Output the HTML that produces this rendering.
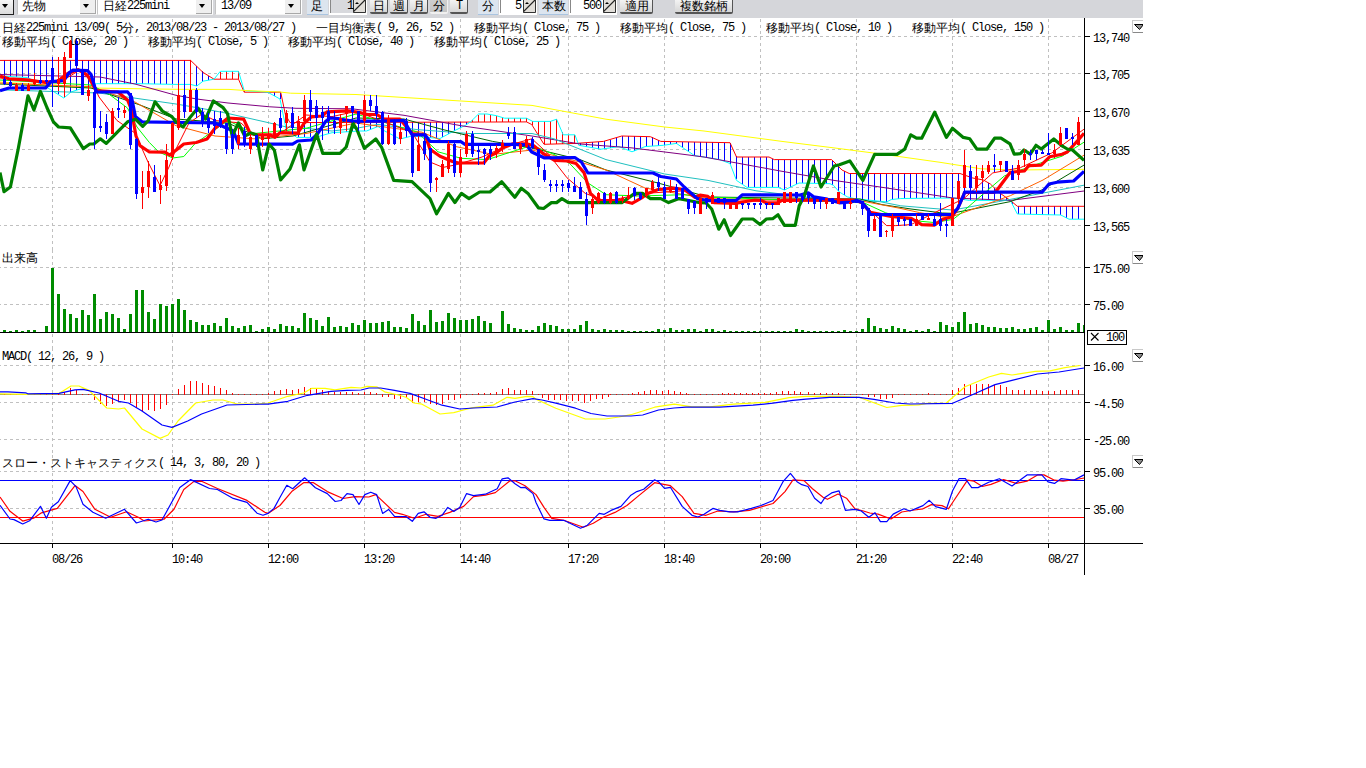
<!DOCTYPE html>
<html lang="ja"><head><meta charset="utf-8"><style>
html,body{margin:0;padding:0;background:#fff;width:1366px;height:768px;overflow:hidden;position:relative}
.t{position:absolute;font-family:"Liberation Mono",monospace;font-size:12px;letter-spacing:-1.2px;line-height:14px;color:#000;white-space:nowrap}
.j{display:inline-block;overflow:hidden;letter-spacing:0;font-family:"Liberation Sans",sans-serif;font-size:12px;vertical-align:top;text-align:left}
svg{position:absolute;left:0;top:0}
.tb{position:absolute;box-sizing:border-box}
</style></head><body>
<div class="tb" style="left:0;top:0;width:1143px;height:18px;background:#d5d6da"></div>
<div class="tb" style="left:0;top:0;width:14px;height:15px;background:linear-gradient(#f6f6f6,#dcdcdc);border-right:1px solid #222;border-bottom:1px solid #222"></div>
<div class="tb" style="left:2px;top:4px;width:0;height:0;border-left:3.5px solid transparent;border-right:3.5px solid transparent;border-top:4px solid #000"></div>
<div class="tb" style="left:17px;top:0;width:80px;height:15px;background:#fff;border-left:1px solid #c4c4c4;border-bottom:1px solid #f4f4f4"></div>
<div class="tb" style="left:80px;top:0;width:16px;height:14px;background:#efefef;border-right:1px solid #a8a8a8;border-bottom:1px solid #a8a8a8"></div>
<div class="tb" style="left:83px;top:4px;width:0;height:0;border-left:3.5px solid transparent;border-right:3.5px solid transparent;border-top:4px solid #000"></div>
<div class="tb" style="left:97px;top:0;width:116px;height:15px;background:#fff;border-left:1px solid #c4c4c4;border-bottom:1px solid #f4f4f4"></div>
<div class="tb" style="left:196px;top:0;width:16px;height:14px;background:#efefef;border-right:1px solid #a8a8a8;border-bottom:1px solid #a8a8a8"></div>
<div class="tb" style="left:199px;top:4px;width:0;height:0;border-left:3.5px solid transparent;border-right:3.5px solid transparent;border-top:4px solid #000"></div>
<div class="tb" style="left:215px;top:0;width:87px;height:15px;background:#fff;border-left:1px solid #c4c4c4;border-bottom:1px solid #f4f4f4"></div>
<div class="tb" style="left:285px;top:0;width:16px;height:14px;background:#efefef;border-right:1px solid #a8a8a8;border-bottom:1px solid #a8a8a8"></div>
<div class="tb" style="left:288px;top:4px;width:0;height:0;border-left:3.5px solid transparent;border-right:3.5px solid transparent;border-top:4px solid #000"></div>
<div class="tb" style="left:307px;top:0;width:21px;height:15px;background:#dce5ef;border-bottom:1px solid #a9c4e0"></div>
<div class="tb" style="left:329px;top:0;width:38px;height:15px;background:#fff"></div>
<div class="tb" style="left:330px;top:0;width:23px;height:13px;background:#d8d9dd;border-left:1px solid #888"></div>
<svg class="tb" style="left:353px;top:0" width="13" height="13"><path d="M0 0H13V13H0Z" fill="#e2dfda"/><path d="M0 12 L12 0" stroke="#222" stroke-width="1.2"/><path d="M0.5 0V12.5H12.5V0" stroke="#333" fill="none"/><path d="M2 4h4l-2-2z" fill="#000"/></svg>
<div class="tb" style="left:370px;top:-2px;width:18px;height:16px;background:linear-gradient(#f8f8f8,#d6d6d6);border-right:1px solid #555;border-bottom:2px solid #555;border-radius:0 0 2px 2px"></div>
<div class="tb" style="left:390px;top:-2px;width:18px;height:16px;background:linear-gradient(#f8f8f8,#d6d6d6);border-right:1px solid #555;border-bottom:2px solid #555;border-radius:0 0 2px 2px"></div>
<div class="tb" style="left:410px;top:-2px;width:18px;height:16px;background:linear-gradient(#f8f8f8,#d6d6d6);border-right:1px solid #555;border-bottom:2px solid #555;border-radius:0 0 2px 2px"></div>
<div class="tb" style="left:430px;top:-2px;width:18px;height:16px;background:linear-gradient(#d0d0d0,#c4c4c4);border-right:1px solid #f0f0f0;border-bottom:2px solid #f0f0f0;border-radius:0 0 2px 2px"></div>
<div class="tb" style="left:450px;top:-2px;width:18px;height:16px;background:linear-gradient(#f8f8f8,#d6d6d6);border-right:1px solid #555;border-bottom:2px solid #555;border-radius:0 0 2px 2px"></div>
<div class="tb" style="left:478px;top:0;width:20px;height:15px;background:#dce5ef;border-bottom:1px solid #a9c4e0"></div>
<div class="tb" style="left:499px;top:0;width:38px;height:15px;background:#fff"></div>
<div class="tb" style="left:500px;top:0;width:23px;height:13px;background:#fff;border-left:1px solid #888"></div>
<svg class="tb" style="left:523px;top:0" width="13" height="13"><path d="M0 0H13V13H0Z" fill="#e2dfda"/><path d="M0 12 L12 0" stroke="#222" stroke-width="1.2"/><path d="M0.5 0V12.5H12.5V0" stroke="#333" fill="none"/><path d="M2 4h4l-2-2z" fill="#000"/></svg>
<div class="tb" style="left:539px;top:0;width:29px;height:15px;background:#dce5ef;border-bottom:1px solid #a9c4e0"></div>
<div class="tb" style="left:569px;top:0;width:48px;height:15px;background:#fff"></div>
<div class="tb" style="left:570px;top:0;width:33px;height:13px;background:#fff;border-left:1px solid #888"></div>
<svg class="tb" style="left:603px;top:0" width="13" height="13"><path d="M0 0H13V13H0Z" fill="#e2dfda"/><path d="M0 12 L12 0" stroke="#222" stroke-width="1.2"/><path d="M0.5 0V12.5H12.5V0" stroke="#333" fill="none"/><path d="M2 4h4l-2-2z" fill="#000"/></svg>
<div class="tb" style="left:620px;top:-2px;width:33px;height:16px;background:linear-gradient(#f8f8f8,#d6d6d6);border-right:1px solid #555;border-bottom:2px solid #555;border-radius:0 0 2px 2px"></div>
<div class="tb" style="left:675px;top:-2px;width:58px;height:16px;background:linear-gradient(#f8f8f8,#d6d6d6);border-right:1px solid #555;border-bottom:2px solid #555;border-radius:0 0 2px 2px"></div>
<div class="t tbt" style="left:22px;top:-1px"><span class="j" style="width:24px">先物</span></div>
<div class="t tbt" style="left:103px;top:-1px"><span class="j" style="width:24px">日経</span>225mini</div>
<div class="t tbt" style="left:221px;top:-1px">13/09</div>
<div class="t tbt" style="left:311px;top:-1px"><span class="j" style="width:12px">足</span></div>
<div class="t tbt" style="left:347px;top:-1px">1</div>
<div class="t tbt" style="left:373px;top:-1px"><span class="j" style="width:12px">日</span></div>
<div class="t tbt" style="left:393px;top:-1px"><span class="j" style="width:12px">週</span></div>
<div class="t tbt" style="left:413px;top:-1px"><span class="j" style="width:12px">月</span></div>
<div class="t tbt" style="left:433px;top:-1px"><span class="j" style="width:12px">分</span></div>
<div class="t tbt" style="left:456px;top:-1px">T</div>
<div class="t tbt" style="left:482px;top:-1px"><span class="j" style="width:12px">分</span></div>
<div class="t tbt" style="left:515px;top:-1px">5</div>
<div class="t tbt" style="left:542px;top:-1px"><span class="j" style="width:24px">本数</span></div>
<div class="t tbt" style="left:583px;top:-1px">500</div>
<div class="t tbt" style="left:625px;top:-1px"><span class="j" style="width:24px">適用</span></div>
<div class="t tbt" style="left:680px;top:-1px"><span class="j" style="width:48px">複数銘柄</span></div>
<svg width="1366" height="768" viewBox="0 0 1366 768"><path d="M52.5 19V250M52.5 250V348M52.5 348V455M52.5 455V543M172.5 19V250M172.5 250V348M172.5 348V455M172.5 455V543M268.5 19V250M268.5 250V348M268.5 348V455M268.5 455V543M364.5 19V250M364.5 250V348M364.5 348V455M364.5 455V543M460.5 19V250M460.5 250V348M460.5 348V455M460.5 455V543M568.5 19V250M568.5 250V348M568.5 348V455M568.5 455V543M664.5 19V250M664.5 250V348M664.5 348V455M664.5 455V543M760.5 19V250M760.5 250V348M760.5 348V455M760.5 455V543M856.5 19V250M856.5 250V348M856.5 348V455M856.5 455V543M952.5 19V250M952.5 250V348M952.5 348V455M952.5 455V543M1048.5 19V250M1048.5 250V348M1048.5 348V455M1048.5 455V543" stroke="#c0c0c0" stroke-width="1" stroke-dasharray="3 3" fill="none" shape-rendering="crispEdges"/>
<path d="M0 36.5H1084M0 73.5H1084M0 111.5H1084M0 149.5H1084M0 187.5H1084M0 225.5H1084M0 267.5H1084M0 304.5H1084M0 365.5H1084M0 402.5H1084M0 439.5H1084M0 471.5H1084M0 508.5H1084" stroke="#c0c0c0" stroke-width="1" stroke-dasharray="3 3" stroke-dashoffset="2" fill="none" shape-rendering="crispEdges"/>
<path d="M3 330h3v2h-3zM9 331h3v1h-3zM15 330h3v2h-3zM21 331h3v1h-3zM27 330h3v2h-3zM33 330h3v2h-3zM45 326h3v6h-3zM51 268h3v64h-3zM57 294h3v38h-3zM63 309h3v23h-3zM69 314h3v18h-3zM75 318h3v14h-3zM81 310h3v22h-3zM87 315h3v17h-3zM93 294h3v38h-3zM99 319h3v13h-3zM105 312h3v20h-3zM111 314h3v18h-3zM117 318h3v14h-3zM123 329h3v3h-3zM129 314h3v18h-3zM135 290h3v42h-3zM141 290h3v42h-3zM147 312h3v20h-3zM153 319h3v13h-3zM159 304h3v28h-3zM165 306h3v26h-3zM171 304h3v28h-3zM177 299h3v33h-3zM183 310h3v22h-3zM189 320h3v12h-3zM195 322h3v10h-3zM201 325h3v7h-3zM207 325h3v7h-3zM213 323h3v9h-3zM219 326h3v6h-3zM225 318h3v14h-3zM231 326h3v6h-3zM237 328h3v4h-3zM243 326h3v6h-3zM249 325h3v7h-3zM255 331h3v1h-3zM261 329h3v3h-3zM267 327h3v5h-3zM273 329h3v3h-3zM279 324h3v8h-3zM285 326h3v6h-3zM291 326h3v6h-3zM297 328h3v4h-3zM303 313h3v19h-3zM309 318h3v14h-3zM315 320h3v12h-3zM321 326h3v6h-3zM327 317h3v15h-3zM333 327h3v5h-3zM339 326h3v6h-3zM345 327h3v5h-3zM351 323h3v9h-3zM357 325h3v7h-3zM363 320h3v12h-3zM369 323h3v9h-3zM375 323h3v9h-3zM381 322h3v10h-3zM387 321h3v11h-3zM393 327h3v5h-3zM399 327h3v5h-3zM405 328h3v4h-3zM411 314h3v18h-3zM417 321h3v11h-3zM423 325h3v7h-3zM429 310h3v22h-3zM435 322h3v10h-3zM441 321h3v11h-3zM447 313h3v19h-3zM453 318h3v14h-3zM459 320h3v12h-3zM465 320h3v12h-3zM471 319h3v13h-3zM477 316h3v16h-3zM483 321h3v11h-3zM489 323h3v9h-3zM501 311h3v21h-3zM507 324h3v8h-3zM513 328h3v4h-3zM519 329h3v3h-3zM525 330h3v2h-3zM531 330h3v2h-3zM537 326h3v6h-3zM543 323h3v9h-3zM549 325h3v7h-3zM555 326h3v6h-3zM561 329h3v3h-3zM567 329h3v3h-3zM573 329h3v3h-3zM579 325h3v7h-3zM585 321h3v11h-3zM591 329h3v3h-3zM597 330h3v2h-3zM603 329h3v3h-3zM609 330h3v2h-3zM615 330h3v2h-3zM621 330h3v2h-3zM627 331h3v1h-3zM633 331h3v1h-3zM639 331h3v1h-3zM645 331h3v1h-3zM651 331h3v1h-3zM657 329h3v3h-3zM663 330h3v2h-3zM669 328h3v4h-3zM675 330h3v2h-3zM681 330h3v2h-3zM687 329h3v3h-3zM693 329h3v3h-3zM699 331h3v1h-3zM705 329h3v3h-3zM711 329h3v3h-3zM717 331h3v1h-3zM723 330h3v2h-3zM729 331h3v1h-3zM735 331h3v1h-3zM741 331h3v1h-3zM747 331h3v1h-3zM753 331h3v1h-3zM759 331h3v1h-3zM765 331h3v1h-3zM771 331h3v1h-3zM777 331h3v1h-3zM783 331h3v1h-3zM789 331h3v1h-3zM795 329h3v3h-3zM801 330h3v2h-3zM807 331h3v1h-3zM813 331h3v1h-3zM819 331h3v1h-3zM825 331h3v1h-3zM831 331h3v1h-3zM837 331h3v1h-3zM843 330h3v2h-3zM849 331h3v1h-3zM855 331h3v1h-3zM861 329h3v3h-3zM867 318h3v14h-3zM873 326h3v6h-3zM879 328h3v4h-3zM885 329h3v3h-3zM891 326h3v6h-3zM897 328h3v4h-3zM903 329h3v3h-3zM909 331h3v1h-3zM915 330h3v2h-3zM921 331h3v1h-3zM927 329h3v3h-3zM933 331h3v1h-3zM939 322h3v10h-3zM945 325h3v7h-3zM951 327h3v5h-3zM957 322h3v10h-3zM963 312h3v20h-3zM969 324h3v8h-3zM975 323h3v9h-3zM981 325h3v7h-3zM987 327h3v5h-3zM993 327h3v5h-3zM999 328h3v4h-3zM1005 328h3v4h-3zM1011 327h3v5h-3zM1017 329h3v3h-3zM1023 329h3v3h-3zM1029 328h3v4h-3zM1035 327h3v5h-3zM1041 330h3v2h-3zM1047 320h3v12h-3zM1053 329h3v3h-3zM1059 327h3v5h-3zM1065 330h3v2h-3zM1071 330h3v2h-3zM1077 323h3v9h-3zM1083 325h1v7h-1z" fill="#008c00" shape-rendering="crispEdges"/>
<path d="M0 394.5H1084" stroke="#808080" fill="none" shape-rendering="crispEdges"/>
<path d="M4.5 394V395M10.5 394V395M16.5 394V395M22.5 394V395M28.5 394V395M34.5 394V395M40.5 394V395M46.5 394V395M52.5 394V395M58.5 394V395M64.5 392V395M70.5 388V395M76.5 390V395M82.5 394V395M88.5 394V395M94.5 394V400M100.5 394V404M106.5 394V406M112.5 394V404M118.5 394V402M124.5 394V400M130.5 394V403M136.5 394V408M142.5 394V411M148.5 394V410M154.5 394V411M160.5 394V409M166.5 394V405M172.5 394V395M178.5 389V395M184.5 385V395M190.5 381V395M196.5 381V395M202.5 383V395M208.5 385V395M214.5 386V395M220.5 388V395M226.5 390V395M232.5 393V395M238.5 394V395M244.5 394V395M250.5 394V395M256.5 394V395M262.5 394V395M268.5 393V395M274.5 391V395M280.5 390V395M286.5 389V395M292.5 390V395M298.5 389V395M304.5 387V395M310.5 388V395M316.5 389V395M322.5 390V395M328.5 391V395M334.5 392V395M340.5 392V395M346.5 392V395M352.5 392V395M358.5 393V395M364.5 392V395M370.5 392V395M376.5 393V395M382.5 394V397M388.5 394V397M394.5 394V399M400.5 394V399M406.5 394V398M412.5 394V403M418.5 394V402M424.5 394V402M430.5 394V404M436.5 394V405M442.5 394V404M448.5 394V400M454.5 394V400M460.5 394V398M466.5 394V395M472.5 394V395M478.5 393V395M484.5 393V395M490.5 393V395M496.5 392V395M502.5 389V395M508.5 388V395M514.5 390V395M520.5 390V395M526.5 390V395M532.5 391V395M538.5 394V395M544.5 394V395M550.5 394V395M556.5 394V395M562.5 394V395M568.5 394V395M574.5 394V395M580.5 394V395M586.5 394V395M592.5 394V395M598.5 394V395M604.5 394V395M610.5 394V395M616.5 394V395M622.5 394V395M628.5 394V395M634.5 394V395M640.5 394V395M646.5 394V395M652.5 394V395M658.5 394V395M664.5 394V395M670.5 394V395M676.5 394V395M682.5 394V395M688.5 394V395M694.5 394V395M700.5 394V395M706.5 394V395M712.5 394V395M718.5 394V395M724.5 394V395M730.5 394V395M736.5 394V395M742.5 394V395M748.5 394V395M754.5 394V395M760.5 394V395M766.5 394V395M772.5 394V395M778.5 394V395M784.5 394V395M790.5 394V395M796.5 394V395M802.5 394V395M808.5 392V395M814.5 393V395M820.5 393V395M826.5 393V395M832.5 393V395M838.5 393V395M844.5 394V395M850.5 394V395M856.5 394V395M862.5 394V395M868.5 394V397M874.5 394V397M880.5 394V399M886.5 394V399M892.5 394V398M898.5 394V395M904.5 394V395M910.5 394V395M916.5 394V395M922.5 394V395M928.5 393V395M934.5 394V395M940.5 394V395M946.5 394V395M952.5 390V395M958.5 388V395M964.5 384V395M970.5 385V395M976.5 384V395M982.5 384V395M988.5 384V395M994.5 385V395M1000.5 385V395M1006.5 387V395M1012.5 390V395M1018.5 390V395M1024.5 390V395M1030.5 390V395M1036.5 390V395M1042.5 391V395M1048.5 391V395M1054.5 391V395M1060.5 390V395M1066.5 390V395M1072.5 390V395M1078.5 390V395M542.5 394V398M548.5 394V400M554.5 394V400M560.5 394V400M566.5 394V401M572.5 394V401M578.5 394V401M584.5 394V403M590.5 394V401M596.5 394V399M602.5 394V399M608.5 394V397M632.5 393V395M638.5 392V395M644.5 391V395M650.5 390V395M656.5 390V395M662.5 391V395M668.5 390V395M674.5 391V395M680.5 392V395M686.5 393V395M722.5 393V395M728.5 393V395M734.5 393V395M740.5 393V395M746.5 393V395M752.5 393V395M758.5 393V395M764.5 393V395M770.5 393V395M776.5 392V395M782.5 391V395M788.5 391V395M794.5 391V395M800.5 392V395" stroke="#ff0000" stroke-width="1" fill="none" shape-rendering="crispEdges"/>
<polyline points="0.0,393.8 25.7,394.3 59.0,393.4 71.0,386.0 79.0,386.0 89.0,390.4 106.7,408.0 118.6,409.0 124.5,408.0 142.0,429.0 160.0,438.4 168.0,435.0 178.0,421.0 195.7,403.0 213.0,400.0 223.0,400.0 237.0,404.0 257.0,404.0 268.0,403.0 287.8,396.3 303.6,393.0 311.5,388.4 325.0,388.4 335.0,389.8 351.0,387.4 361.0,388.0 367.0,386.4 376.7,386.8 384.6,391.8 398.4,395.0 406.0,397.3 414.0,403.0 422.0,404.2 440.0,414.0 453.8,412.7 463.6,410.0 471.5,407.8 493.0,405.2 507.0,397.3 515.0,398.3 527.0,396.3 533.0,396.7 536.0,399.3 555.8,408.2 585.4,419.0 605.0,419.0 619.0,417.0 631.0,414.7 654.6,407.2 674.3,404.2 692.0,406.8 710.0,406.8 733.6,404.2 765.0,402.3 789.0,397.7 806.0,396.3 840.0,396.3 859.0,397.3 867.7,400.5 886.8,407.5 901.7,405.4 918.6,404.8 927.0,403.3 946.0,403.3 965.0,386.7 988.7,377.0 1001.5,373.3 1012.0,375.0 1035.4,371.4 1050.0,370.8 1065.0,367.6 1080.0,365.5" fill="none" stroke="#ffff00" stroke-width="1.2" stroke-linejoin="round" />
<polyline points="0.0,391.8 8.0,391.8 25.7,392.8 27.7,393.8 59.0,393.4 75.0,389.8 83.0,389.4 99.0,393.0 118.6,401.3 128.5,403.0 142.0,411.0 162.0,425.0 172.0,427.4 187.7,421.0 201.6,414.0 227.0,405.0 265.0,404.0 268.0,404.2 287.8,401.3 307.5,395.3 331.0,391.4 347.0,390.4 361.0,390.0 369.0,388.0 380.6,388.0 394.5,390.4 410.0,393.4 426.0,399.3 442.0,405.2 459.7,409.0 473.5,408.0 497.0,407.0 515.0,402.0 533.0,398.7 542.0,400.0 555.8,403.2 575.5,408.2 591.0,413.5 607.0,416.0 631.0,416.0 642.7,415.0 658.5,410.0 674.0,408.0 686.0,407.2 719.8,407.2 753.0,405.2 773.0,403.2 793.0,400.3 806.0,399.2 829.5,397.3 859.0,397.3 874.0,399.4 895.0,403.0 910.0,404.0 952.6,403.3 974.0,394.0 995.0,384.6 1012.0,380.3 1037.5,374.0 1059.0,372.0 1084.0,368.0" fill="none" stroke="#0000ff" stroke-width="1.2" stroke-linejoin="round" />
<path d="M0 480.5H1084" stroke="#0000ff" fill="none" shape-rendering="crispEdges"/>
<path d="M0 517.5H1084" stroke="#ff0000" fill="none" shape-rendering="crispEdges"/>
<polyline points="0.0,497.0 10.0,511.3 22.7,521.1 33.6,518.2 41.5,512.8 57.3,508.3 75.0,485.6 83.0,491.5 94.9,509.3 110.7,517.2 126.5,511.7 138.3,517.2 144.3,521.0 164.0,519.2 174.0,509.3 183.8,489.5 193.7,481.6 201.6,481.2 217.4,488.5 247.0,500.4 264.8,512.3 268.0,513.4 279.9,505.5 291.7,491.6 303.6,482.7 313.5,482.7 327.3,491.6 343.0,498.5 355.0,496.6 368.8,497.0 375.7,494.6 394.5,512.4 402.4,514.3 414.2,518.3 426.0,514.3 438.0,516.3 449.8,512.4 463.6,506.4 473.5,496.6 485.4,495.2 495.3,492.6 510.0,480.8 515.0,480.8 525.0,485.7 536.0,494.6 544.0,507.4 551.8,518.3 563.7,520.3 583.4,527.2 593.3,523.2 603.2,517.3 615.0,512.4 626.9,505.5 638.8,495.6 654.6,482.7 670.4,485.7 682.2,496.6 694.0,513.4 706.0,515.3 717.8,511.0 733.6,511.8 749.4,510.4 773.0,503.5 785.0,491.6 793.0,479.8 804.0,480.6 812.5,488.7 823.0,497.2 827.4,499.3 838.0,494.0 846.5,498.2 855.0,508.8 863.4,511.0 869.8,513.0 878.0,514.1 891.0,519.0 901.7,512.0 914.4,510.0 923.0,508.8 931.4,504.6 942.0,505.6 948.4,508.8 952.6,502.5 967.5,480.2 974.0,481.2 982.3,486.5 991.0,484.4 1003.6,479.5 1016.3,483.4 1027.0,481.2 1037.5,474.9 1044.0,474.9 1054.5,480.2 1063.0,481.2 1075.8,479.5 1084.0,478.0" fill="none" stroke="#ff0000" stroke-width="1.2" stroke-linejoin="round" />
<polyline points="0.0,505.3 10.0,519.0 14.0,519.6 22.7,524.0 29.6,520.8 40.5,506.3 46.4,518.2 51.4,507.3 58.3,501.8 70.2,480.6 76.0,486.6 83.0,504.3 92.9,512.3 105.7,518.2 124.5,509.3 136.4,523.0 148.2,519.2 156.0,522.0 162.0,520.0 179.8,487.5 190.7,479.6 209.5,488.5 217.4,489.5 233.2,498.4 247.0,502.4 257.0,513.2 263.0,515.2 268.0,513.4 274.0,508.4 279.9,497.5 286.8,485.3 292.7,488.7 304.6,477.8 315.4,487.7 327.3,493.6 335.2,501.5 341.0,500.5 347.0,493.6 353.0,494.6 359.0,504.5 364.8,494.6 370.8,492.2 376.7,494.6 382.6,513.4 388.6,509.4 394.5,516.3 406.3,516.7 412.3,521.3 418.2,513.4 424.0,511.8 430.0,517.3 436.0,518.3 442.0,515.3 447.8,507.4 453.8,511.4 459.7,507.4 466.6,493.6 473.5,495.6 485.4,494.2 497.2,488.7 502.2,478.8 508.0,477.8 515.0,483.7 521.0,487.7 525.0,487.3 533.0,493.6 536.0,502.5 544.0,518.9 549.8,520.3 563.7,520.3 580.5,528.2 587.4,525.2 599.2,513.4 604.2,514.3 611.0,510.4 621.0,506.4 630.9,495.2 636.8,491.6 643.7,489.2 654.6,479.8 658.5,481.7 664.5,488.3 670.4,487.3 682.2,506.4 692.0,515.3 698.0,517.0 704.0,514.3 712.9,508.4 719.8,510.4 729.7,511.8 737.6,511.8 751.4,508.4 761.0,505.5 773.0,500.5 783.0,481.7 790.4,473.4 797.0,481.7 801.8,484.7 808.0,486.5 814.6,498.2 821.0,503.5 825.2,497.2 831.6,492.9 839.0,490.8 845.4,510.3 855.0,509.3 861.3,511.0 868.8,517.3 875.0,512.7 880.4,521.6 886.8,521.6 893.2,514.1 903.8,508.8 910.0,511.0 923.0,505.6 929.3,500.3 935.6,506.7 946.3,509.3 952.6,490.8 959.0,478.7 965.4,478.7 971.7,487.6 978.0,487.6 988.7,482.3 999.3,478.7 1012.0,485.9 1027.0,474.9 1041.8,474.9 1048.0,481.9 1054.5,483.4 1061.0,478.7 1073.6,480.2 1084.0,474.9" fill="none" stroke="#0000ff" stroke-width="1.2" stroke-linejoin="round" />
<g><path d="M4.5 60.4V76.2M10.5 60.4V76.5M16.5 60.4V76.9M22.5 60.4V77.2M28.5 60.4V77.8M34.5 60.4V80.8M40.5 60.4V83.8M46.5 60.4V86.9M52.5 60.4V90.6M58.5 60.4V94.4M64.5 60.4V97.8M70.5 60.4V92.8M76.5 60.4V90.4M82.5 60.4V88.4M88.5 60.4V86.5M94.5 60.4V84.5M100.5 60.4V83.7M106.5 60.4V83.7M112.5 60.4V83.7M118.5 60.4V83.7M124.5 60.4V83.7M130.5 60.4V83.7M136.5 60.4V83.7M142.5 60.4V83.7M148.5 60.4V83.9M154.5 60.4V84.0M160.5 60.4V84.1M166.5 60.4V84.2M172.5 60.4V84.3M178.5 60.4V84.4M184.5 60.4V84.4M190.5 60.4V84.4M196.5 65.6V85.8M202.5 71.4V82.0M208.5 75.5V80.3M274.5 92.2V95.7M280.5 92.2V99.0M286.5 115.6V128.4M292.5 122.6V133.9M298.5 122.6V137.4M304.5 122.6V137.4M310.5 122.5V137.4M316.5 122.5V137.2M322.5 122.5V135.5M328.5 122.5V133.8M334.5 122.5V132.6M340.5 122.5V132.2M346.5 122.4V131.8M352.5 122.4V131.4M358.5 122.4V131.1M364.5 122.4V131.0M370.5 122.4V129.6M376.5 122.3V127.3M382.5 122.3V129.2M388.5 122.3V132.7M394.5 122.3V135.8M400.5 122.3V139.0M406.5 122.3V137.5M412.5 122.2V136.0M418.5 122.2V136.5M424.5 122.2V137.1M430.5 122.2V137.6M436.5 122.2V138.1M442.5 122.2V137.4M448.5 122.1V134.2M454.5 122.1V131.0M460.5 122.1V128.0M466.5 122.1V125.0M580.5 143.1V145.5M586.5 142.7V146.6M592.5 142.2V147.6M598.5 141.8V148.7M604.5 141.3V148.8M610.5 139.5V147.9M616.5 137.7V147.0M622.5 136.0V147.8M628.5 136.2V150.2M634.5 136.3V151.0M640.5 136.4V148.6M646.5 136.6V146.5M652.5 137.4V146.1M658.5 140.1V145.7M664.5 141.5V145.2M670.5 141.6V144.3M676.5 141.7V143.5M682.5 141.8V147.2M688.5 141.9V151.2M694.5 142.0V155.2M700.5 142.1V156.4M706.5 142.2V157.3M712.5 142.4V158.3M718.5 142.5V159.3M724.5 142.6V161.2M730.5 142.7V163.5M736.5 155.9V179.1M742.5 157.0V184.1M748.5 157.0V187.4M754.5 157.0V187.4M760.5 157.0V187.4M766.5 157.0V187.4M772.5 158.5V187.4M778.5 159.6V187.4M784.5 159.6V189.8M790.5 159.6V187.3M796.5 159.6V184.4M802.5 159.6V183.1M808.5 159.6V183.2M814.5 159.6V183.3M820.5 159.6V183.5M826.5 159.6V183.6M832.5 160.0V184.7M838.5 166.0V190.5M844.5 171.0V194.8M850.5 173.5V197.5M856.5 173.5V198.8M862.5 173.5V199.4M868.5 173.5V200.0M874.5 173.5V200.6M880.5 173.5V201.2M886.5 173.5V201.8M892.5 173.5V199.5M898.5 173.5V198.8M904.5 173.5V198.5M910.5 173.5V198.4M916.5 173.5V198.4M922.5 173.5V198.3M928.5 173.5V198.2M934.5 173.5V198.2M940.5 173.5V198.1M946.5 173.5V198.1M952.5 173.5V198.0M958.5 173.5V198.7M964.5 174.9V199.6M970.5 177.0V200.4M976.5 178.6V200.4M982.5 179.7V200.4M988.5 182.6V200.4M994.5 187.6V200.4M1000.5 193.2V200.4M1006.5 197.4V200.4M1012.5 201.8V203.7M1018.5 206.3V214.0M1024.5 206.3V214.2M1030.5 206.3V214.3M1036.5 206.3V214.4M1042.5 206.3V214.6M1048.5 206.3V214.7M1054.5 206.3V214.8M1060.5 206.3V215.0M1066.5 206.3V217.7M1072.5 206.3V219.2M1078.5 206.3V219.2" stroke="#0000ff" stroke-width="1" fill="none" shape-rendering="crispEdges"/><path d="M220.5 71.7V79.2M226.5 71.3V79.2M232.5 71.3V79.2M238.5 71.3V79.2M244.5 89.9V91.7M472.5 120.4V122.1M478.5 114.5V122.0M484.5 114.0V122.0M490.5 114.5V122.0M496.5 115.6V122.0M502.5 117.4V122.0M508.5 118.2V122.0M514.5 118.2V121.9M520.5 118.2V121.9M526.5 118.2V121.9M532.5 121.0V125.0M538.5 121.4V134.6M544.5 121.4V144.3M550.5 121.4V144.1M556.5 119.4V144.0M562.5 132.0V143.8M568.5 134.8V143.6M574.5 134.8V143.5" stroke="#ff0000" stroke-width="1" fill="none" shape-rendering="crispEdges"/><polyline points="0.0,60.4 190.6,60.4 203.0,72.4 214.0,79.2 238.5,79.2 244.2,92.2 280.7,92.2 285.4,114.6 290.0,122.6 526.5,121.9 531.7,124.5 544.0,144.3 576.0,143.4 603.5,141.4 621.8,136.0 650.4,136.7 660.8,141.4 730.0,142.7 736.5,157.0 769.0,157.0 774.3,159.6 831.6,159.6 842.0,170.0 849.2,173.5 960.0,173.5 972.8,178.0 983.4,180.0 990.4,184.0 998.6,192.2 1010.3,200.4 1017.4,206.3 1084.0,206.3" fill="none" stroke="#ff0000" stroke-width="1" stroke-linejoin="round" /><polyline points="0.0,76.0 27.3,77.5 45.6,86.6 63.8,98.0 71.0,92.0 96.6,83.7 140.0,83.7 176.0,84.4 190.6,84.4 196.8,86.0 203.0,81.2 214.0,79.2 220.3,71.3 238.5,71.3 244.2,90.6 267.7,92.2 280.0,99.0 286.2,129.6 296.7,137.4 315.4,137.4 332.0,132.7 359.0,131.0 366.5,131.0 378.0,126.5 384.0,130.6 400.0,139.0 412.0,136.0 440.0,138.5 453.5,131.2 466.0,125.0 471.0,121.4 478.5,114.0 487.0,114.0 496.0,115.6 504.6,118.2 526.5,118.2 532.7,121.4 550.4,121.4 556.6,119.2 563.2,134.8 574.9,134.8 578.8,145.3 600.9,149.2 619.0,146.6 632.0,151.8 645.0,146.6 663.4,145.3 676.4,143.4 694.7,155.7 704.0,157.0 719.6,159.6 730.0,163.5 736.5,180.4 747.0,187.4 778.0,187.4 784.4,190.0 799.0,183.0 830.0,183.7 833.7,185.5 839.2,191.9 847.4,196.9 854.7,198.7 863.8,199.6 886.6,201.9 891.2,199.6 900.8,198.5 953.0,198.0 969.3,200.4 1010.3,200.4 1017.4,214.0 1060.8,215.0 1069.0,219.2 1084.0,219.2" fill="none" stroke="#00ffff" stroke-width="1" stroke-linejoin="round" /><polyline points="0.0,82.0 91.0,88.0 176.0,89.3 229.0,89.4 247.0,90.6 280.0,92.0 290.6,93.2 356.0,94.5 532.0,105.4 606.0,119.2 664.7,127.0 704.0,131.0 782.0,141.4 834.0,147.9 884.0,154.4 940.0,162.3 981.0,168.8 1016.2,170.0 1084.0,169.3" fill="none" stroke="#ffff00" stroke-width="1" stroke-linejoin="round" /><polyline points="0.0,74.5 100.0,77.0 135.0,84.0 176.0,95.3 196.8,99.0 228.0,103.0 269.8,106.8 296.0,108.3 352.0,108.8 404.0,115.3 461.0,125.7 532.0,136.0 580.0,144.0 632.0,147.9 684.0,154.4 704.0,157.0 782.0,171.3 834.0,180.4 880.0,187.0 953.0,198.0 1010.3,200.4 1084.0,191.0" fill="none" stroke="#800080" stroke-width="1" stroke-linejoin="round" /><polyline points="0.0,89.8 99.0,93.0 176.0,104.0 207.0,109.4 228.0,113.5 269.8,123.0 286.4,127.0 306.0,128.3 332.0,131.0 356.0,128.3 378.0,124.4 417.0,129.6 469.0,133.5 532.0,133.5 554.0,138.8 606.0,159.6 664.7,174.0 708.0,180.4 756.0,190.8 808.0,197.3 860.0,200.7 880.0,201.7 900.8,205.8 932.0,208.4 953.0,210.0 998.6,201.6 1084.0,185.2" fill="none" stroke="#20c0c0" stroke-width="1" stroke-linejoin="round" /><polyline points="0.0,84.0 91.0,88.0 140.0,105.0 176.0,119.0 228.0,123.0 262.0,138.8 293.0,136.0 356.0,118.0 404.0,119.0 443.0,129.6 492.6,141.4 532.0,148.0 580.0,159.6 606.0,170.0 658.0,183.0 708.0,197.0 860.0,199.0 882.0,204.6 911.0,209.0 942.5,213.0 951.7,213.3 1010.3,201.6 1042.0,189.9 1059.0,180.0 1084.0,165.1" fill="none" stroke="#006000" stroke-width="1" stroke-linejoin="round" /><polyline points="0.0,83.0 91.0,86.7 135.0,102.0 176.0,125.7 215.0,136.0 254.0,138.8 306.0,133.5 356.0,123.0 422.0,132.2 456.0,146.6 492.6,154.4 532.0,150.0 580.0,162.0 606.0,170.0 645.0,188.0 708.0,198.6 863.8,201.4 900.0,208.3 919.6,212.6 942.5,216.8 951.7,216.8 1010.3,195.7 1043.0,180.0 1084.0,155.2" fill="none" stroke="#ff6000" stroke-width="1" stroke-linejoin="round" /><polyline points="0.0,80.0 91.0,85.0 108.8,94.0 127.5,108.0 137.0,127.0 149.4,142.5 158.8,152.0 172.8,158.0 183.8,156.5 196.0,142.5 202.0,138.8 228.0,120.5 254.0,133.5 306.0,128.3 356.0,114.0 417.0,132.0 438.0,151.8 461.0,158.3 487.4,159.6 532.0,145.3 554.0,154.4 569.7,163.5 588.0,183.0 606.0,194.7 637.4,196.0 684.0,194.7 708.0,197.0 863.8,202.8 885.7,212.8 911.0,220.4 934.0,222.5 953.0,219.4 960.0,214.0 1004.5,175.8 1039.0,163.5 1062.0,156.2 1084.0,142.2" fill="none" stroke="#00ff00" stroke-width="1" stroke-linejoin="round" /><polyline points="0.0,78.0 60.0,82.0 80.0,70.0 91.0,80.0 99.0,97.0 117.0,120.5 135.0,133.0 148.0,162.0 160.0,185.6 169.0,167.0 176.0,149.0 189.0,123.0 202.0,114.0 215.0,120.5 241.0,123.0 254.0,135.0 280.0,133.5 306.0,115.0 332.0,116.6 356.0,111.4 412.0,132.2 430.0,162.0 443.0,167.4 456.0,164.8 482.0,157.0 508.0,145.3 532.0,138.8 548.8,154.4 567.0,177.8 585.3,193.4 606.0,201.2 645.0,193.4 684.0,190.8 708.0,201.2 860.0,201.0 875.7,215.6 886.6,225.6 895.7,225.6 911.0,224.6 940.0,210.0 963.4,199.0 992.8,172.9 1020.4,167.7 1051.7,153.0 1084.0,129.2" fill="none" stroke="#ff0000" stroke-width="1" stroke-linejoin="round" /><polyline points="0.0,76.0 9.0,78.8 27.3,79.8 45.6,82.5 51.0,81.6 57.3,81.5 67.7,73.6 78.0,69.7 87.2,75.0 96.4,90.6 118.0,92.0 127.5,100.0 132.0,111.0 133.8,123.8 136.0,136.0 140.0,145.6 149.4,152.0 165.0,152.2 169.7,155.0 176.0,150.3 183.8,144.0 196.2,142.5 207.0,139.0 215.0,128.3 228.0,118.0 243.7,119.2 250.2,133.5 256.7,134.8 269.8,134.8 275.0,137.4 280.0,132.7 297.7,133.2 304.0,123.3 311.2,117.0 321.7,116.0 326.9,111.9 347.7,110.8 359.0,112.4 367.5,114.5 376.9,114.5 384.0,119.2 400.0,119.2 412.0,133.5 425.0,134.8 430.0,149.2 440.0,156.2 452.5,161.5 458.8,163.0 483.8,163.0 489.0,156.2 496.0,153.0 502.5,148.0 513.0,143.8 526.5,143.8 533.8,145.8 544.0,154.2 554.6,160.4 567.0,161.0 576.0,163.5 584.0,172.6 590.5,193.4 598.3,200.7 621.8,200.7 632.0,203.3 642.6,197.3 647.8,193.4 658.2,189.5 673.8,188.2 684.2,189.5 694.7,197.3 700.0,195.2 707.8,196.4 714.0,202.7 735.0,203.4 754.7,200.0 761.0,200.3 767.2,203.4 776.6,203.4 782.0,200.3 825.5,200.0 854.7,200.0 862.0,202.8 870.2,212.4 891.2,216.5 911.2,218.3 921.7,224.6 934.2,225.1 942.5,219.4 952.0,216.8 957.6,208.6 963.4,195.7 964.6,192.5 994.0,192.5 996.3,191.0 1010.3,172.3 1024.6,170.8 1028.8,165.6 1041.2,165.1 1049.6,156.8 1062.0,154.2 1067.3,152.0 1077.7,140.6 1084.0,133.3" fill="none" stroke="#ff0000" stroke-width="3.2" stroke-linejoin="round" /><polyline points="0.0,90.7 9.0,88.0 45.6,88.0 51.0,81.6 63.8,80.7 69.3,72.5 73.0,70.2 87.5,70.6 91.0,74.3 94.8,87.0 96.6,92.0 127.6,91.9 131.5,97.0 135.4,116.6 142.0,121.8 215.0,123.0 233.3,131.0 238.5,144.0 292.5,144.2 297.7,141.0 311.2,140.0 317.5,133.8 325.8,121.2 330.0,118.0 338.3,118.6 342.5,119.7 353.0,121.2 380.0,121.2 404.0,120.5 412.0,134.8 425.0,134.8 430.0,141.4 460.8,141.7 465.0,144.3 513.0,144.3 526.5,144.8 531.7,152.0 544.0,157.8 574.9,157.5 581.4,162.0 587.9,173.0 653.0,173.0 660.8,176.5 676.4,179.0 684.2,187.0 697.3,198.6 708.0,200.7 736.0,200.7 742.2,194.8 800.0,195.0 808.2,192.8 813.7,196.9 827.3,199.2 839.2,202.8 851.0,202.0 856.5,200.5 862.0,202.4 868.4,210.1 870.2,214.5 951.7,214.5 957.6,208.6 963.4,195.7 964.6,192.2 1042.0,192.2 1049.0,184.0 1057.2,182.2 1073.6,181.0 1084.0,171.4" fill="none" stroke="#0000ff" stroke-width="3.2" stroke-linejoin="round" /><polyline points="0.0,172.6 4.0,191.6 10.4,187.0 18.2,149.0 28.0,95.8 33.9,110.0 40.4,91.4 46.9,107.5 53.4,121.8 58.6,127.0 70.3,127.8 83.3,148.6 89.8,144.0 93.8,144.0 100.3,138.8 106.3,143.4 119.8,129.6 127.6,121.8 135.4,119.2 142.7,126.3 148.4,120.5 155.0,101.8 162.8,111.4 171.9,116.6 176.0,122.0 183.0,127.0 190.0,117.5 197.8,108.0 205.6,119.0 213.4,101.0 222.8,107.3 227.5,113.6 232.2,136.0 238.4,123.0 244.7,136.0 251.0,133.0 256.4,134.7 262.7,170.0 269.0,144.0 274.4,150.3 280.6,180.0 290.0,169.0 299.4,144.8 304.0,170.0 316.6,134.0 322.8,153.4 340.0,153.4 346.2,147.0 353.0,123.3 357.0,129.6 364.4,148.3 375.8,139.0 381.6,147.3 393.7,180.4 412.0,181.7 430.0,198.6 436.6,213.8 448.4,193.4 454.9,202.5 461.4,193.4 469.0,198.6 479.6,192.0 490.0,192.0 501.7,181.7 514.8,197.3 521.3,188.2 528.0,193.4 538.4,207.8 543.6,208.5 551.4,202.6 556.6,202.6 561.9,198.6 568.4,202.6 621.8,202.6 634.8,193.4 642.6,193.4 650.4,198.6 660.8,198.6 668.6,202.6 679.0,198.6 700.0,202.7 706.0,203.0 711.7,209.0 718.8,229.2 724.2,219.8 730.5,235.5 742.2,219.0 753.0,219.0 760.0,224.5 766.4,219.0 772.7,218.7 778.0,214.8 784.4,225.3 795.3,225.3 799.2,205.8 804.3,196.0 813.4,166.0 821.0,187.0 834.2,166.0 839.4,164.8 849.8,160.9 862.9,180.4 874.6,154.4 897.0,154.4 904.7,149.2 910.7,134.8 916.5,138.2 921.7,138.2 934.7,112.2 946.4,137.4 952.4,128.3 963.3,137.4 969.8,138.8 976.9,149.2 986.8,149.2 994.6,138.2 1001.0,138.2 1010.0,143.8 1014.2,154.2 1020.4,153.6 1024.0,150.0 1030.3,154.2 1036.0,145.3 1041.2,149.0 1053.8,139.0 1062.0,145.8 1067.3,149.0 1072.5,150.0 1084.0,160.4" fill="none" stroke="#008000" stroke-width="3.2" stroke-linejoin="round" /><path d="M16.5 83.0V91.0M28.5 83.0V91.0M34.5 73.0V85.0M58.5 57.0V90.7M64.5 52.0V97.0M70.5 40.0V58.0M88.5 85.0V100.7M112.5 108.0V133.5M124.5 106.0V118.0M142.5 171.0V209.0M148.5 161.0V198.0M160.5 175.0V204.0M166.5 144.0V191.0M172.5 122.0V160.0M178.5 83.0V130.0M190.5 60.0V111.5M238.5 128.0V149.0M250.5 133.5V154.0M262.5 127.0V147.0M268.5 128.0V143.0M274.5 122.0V137.0M286.5 110.0V131.0M298.5 116.0V134.8M304.5 95.0V123.0M340.5 114.0V134.0M346.5 106.0V131.0M364.5 95.0V129.6M388.5 115.0V145.0M400.5 128.0V144.0M418.5 136.0V171.0M436.5 176.5V192.0M442.5 160.0V176.5M448.5 141.0V172.6M460.5 149.0V176.5M466.5 131.0V157.0M496.5 145.0V158.0M502.5 140.0V152.0M520.5 143.0V154.0M526.5 136.0V148.0M592.5 196.0V214.0M598.5 192.0V204.0M610.5 192.0V204.0M622.5 196.0V203.0M628.5 187.0V200.0M646.5 188.0V198.0M652.5 180.4V190.8M670.5 180.4V193.4M700.5 198.0V214.4M712.5 192.0V204.2M730.5 202.7V209.0M736.5 202.7V209.0M778.5 198.0V205.0M784.5 192.0V203.4M790.5 192.0V203.4M826.5 198.3V208.7M838.5 191.9V203.7M850.5 198.3V208.7M874.5 214.7V230.6M886.5 230.0V237.0M892.5 214.0V237.0M916.5 214.0V225.6M928.5 214.0V219.4M952.5 198.0V225.6M958.5 181.0V203.8M964.5 150.0V187.5M976.5 165.0V192.0M982.5 165.0V181.7M988.5 160.5V173.5M1000.5 160.5V171.7M1018.5 160.0V180.0M1024.5 149.0V166.7M1054.5 144.0V158.0M1060.5 127.0V144.8M1078.5 117.2V144.8" stroke="#ff0000" stroke-width="1" fill="none" shape-rendering="crispEdges"/><path d="M15 84.8h3v5.9h-3zM27 84.8h3v5.9h-3zM33 80.0h3v4.0h-3zM57 79.0h3v5.3h-3zM63 57.0h3v27.3h-3zM69 41.0h3v16.9h-3zM87 89.8h3v6.2h-3zM111 111.4h3v22.1h-3zM123 110.0h3v3.0h-3zM141 187.0h3v6.4h-3zM147 171.0h3v16.0h-3zM159 185.0h3v5.0h-3zM165 159.6h3v26.0h-3zM171 123.0h3v34.0h-3zM177 95.0h3v33.0h-3zM189 90.0h3v21.5h-3zM237 135.0h3v9.0h-3zM249 137.4h3v11.6h-3zM261 133.5h3v6.5h-3zM267 135.0h3v4.0h-3zM273 123.0h3v13.0h-3zM285 112.7h3v10.3h-3zM297 120.5h3v14.3h-3zM303 100.0h3v21.0h-3zM339 118.0h3v9.5h-3zM345 106.0h3v8.0h-3zM363 100.0h3v21.0h-3zM387 119.0h3v25.0h-3zM399 132.0h3v7.0h-3zM417 145.3h3v25.7h-3zM435 178.0h3v2.0h-3zM441 163.5h3v13.0h-3zM447 144.0h3v24.7h-3zM459 157.0h3v15.6h-3zM465 133.5h3v20.9h-3zM495 148.0h3v4.0h-3zM501 143.0h3v5.0h-3zM519 144.0h3v5.0h-3zM525 139.0h3v7.6h-3zM591 198.6h3v9.2h-3zM597 193.4h3v9.2h-3zM609 193.4h3v9.2h-3zM621 198.0h3v3.0h-3zM627 194.7h3v3.9h-3zM645 188.2h3v7.8h-3zM651 181.7h3v7.8h-3zM669 187.0h3v5.0h-3zM699 198.0h3v16.4h-3zM711 194.8h3v9.4h-3zM729 202.7h3v6.3h-3zM735 202.7h3v6.3h-3zM777 198.0h3v7.0h-3zM783 192.0h3v11.4h-3zM789 192.0h3v11.4h-3zM825 198.3h3v5.4h-3zM837 191.9h3v11.8h-3zM849 202.0h3v1.7h-3zM873 219.2h3v11.4h-3zM885 230.5h3v1.5h-3zM891 217.3h3v13.5h-3zM915 219.4h3v6.2h-3zM927 218.0h3v1.5h-3zM951 198.0h3v27.6h-3zM957 181.0h3v18.2h-3zM963 165.2h3v22.3h-3zM975 175.8h3v11.7h-3zM981 171.0h3v6.5h-3zM987 165.2h3v6.5h-3zM999 160.5h3v4.7h-3zM1017 165.0h3v10.0h-3zM1023 154.2h3v6.2h-3zM1053 150.0h3v4.2h-3zM1059 133.3h3v11.5h-3zM1077 121.9h3v22.9h-3z" fill="#ff0000" shape-rendering="crispEdges"/><path d="M4.5 77.0V85.0M10.5 80.0V88.0M22.5 83.0V91.0M40.5 79.0V84.0M46.5 78.0V84.0M52.5 57.0V106.7M76.5 38.0V68.0M82.5 68.0V95.3M94.5 90.0V149.0M100.5 111.0V132.0M106.5 114.0V139.0M118.5 97.0V118.0M130.5 93.0V149.0M136.5 138.0V198.6M154.5 165.0V192.0M184.5 62.0V117.7M196.5 88.0V117.7M202.5 108.0V127.0M208.5 113.0V133.0M214.5 111.0V133.5M220.5 111.0V128.0M226.5 123.0V154.0M232.5 130.0V154.0M244.5 127.0V147.0M256.5 135.0V147.0M280.5 110.0V132.0M292.5 107.0V133.5M310.5 90.0V121.0M316.5 100.0V132.0M322.5 106.0V140.0M328.5 106.0V133.0M334.5 111.0V134.0M352.5 106.0V123.0M358.5 111.0V131.0M370.5 95.0V111.0M376.5 95.0V119.0M382.5 111.0V145.0M394.5 119.0V145.0M406.5 118.0V135.0M412.5 134.0V176.5M424.5 123.0V160.0M430.5 148.0V192.0M454.5 141.0V176.5M472.5 131.0V157.0M478.5 144.0V165.0M484.5 148.0V165.0M490.5 146.0V160.0M508.5 127.0V139.0M514.5 127.0V149.0M532.5 137.4V149.0M538.5 149.0V175.0M544.5 163.5V181.7M550.5 180.4V192.0M556.5 180.4V192.0M562.5 180.4V192.0M568.5 180.4V192.0M574.5 176.5V192.0M580.5 181.7V198.6M586.5 192.0V224.7M604.5 192.0V204.0M616.5 191.0V204.0M634.5 187.0V200.0M640.5 192.0V200.0M658.5 176.5V190.8M664.5 181.7V198.6M676.5 184.0V198.6M682.5 188.0V198.6M688.5 198.6V214.0M694.5 201.0V214.0M706.5 198.0V209.0M718.5 198.0V203.4M724.5 198.0V209.0M742.5 203.4V209.0M748.5 203.4V209.0M754.5 203.4V209.0M760.5 198.0V209.0M766.5 203.4V209.0M772.5 203.4V209.0M796.5 192.0V203.4M802.5 194.0V202.0M808.5 192.3V203.7M814.5 196.4V208.7M820.5 198.0V208.7M832.5 198.3V203.7M844.5 202.8V208.7M856.5 199.0V203.0M862.5 201.0V214.7M868.5 208.3V237.0M880.5 214.0V237.0M898.5 216.8V225.6M904.5 216.8V225.6M910.5 219.4V225.6M922.5 216.2V220.0M934.5 216.2V225.6M940.5 203.2V230.8M946.5 219.4V237.0M970.5 165.0V199.0M994.5 154.0V171.7M1006.5 160.5V171.7M1012.5 165.0V180.0M1030.5 149.5V160.4M1036.5 149.5V160.4M1042.5 149.5V154.2M1048.5 133.3V154.2M1066.5 127.6V138.5M1072.5 133.3V144.8" stroke="#0000ff" stroke-width="1" fill="none" shape-rendering="crispEdges"/><path d="M3 79.0h3v5.3h-3zM9 82.0h3v4.0h-3zM21 84.8h3v5.9h-3zM39 80.0h3v3.0h-3zM45 80.0h3v2.0h-3zM51 68.0h3v12.7h-3zM75 41.0h3v25.0h-3zM81 71.0h3v23.5h-3zM93 92.0h3v36.0h-3zM99 126.0h3v2.0h-3zM105 122.0h3v11.5h-3zM117 108.0h3v2.0h-3zM129 93.0h3v52.0h-3zM135 138.8h3v54.7h-3zM153 176.5h3v15.5h-3zM183 94.8h3v16.7h-3zM195 89.6h3v21.9h-3zM201 111.5h3v10.5h-3zM207 117.7h3v10.3h-3zM213 119.0h3v7.0h-3zM219 118.0h3v6.0h-3zM225 123.0h3v26.0h-3zM231 133.5h3v15.5h-3zM243 131.0h3v13.0h-3zM255 135.0h3v9.0h-3zM279 118.0h3v10.0h-3zM291 112.7h3v15.3h-3zM309 100.0h3v12.0h-3zM315 106.0h3v12.0h-3zM321 112.0h3v6.0h-3zM327 111.4h3v9.6h-3zM333 121.0h3v7.0h-3zM351 106.0h3v6.0h-3zM357 111.4h3v13.0h-3zM369 100.0h3v6.0h-3zM375 106.0h3v8.0h-3zM381 112.0h3v32.0h-3zM393 121.0h3v23.0h-3zM405 120.5h3v10.5h-3zM411 134.8h3v37.8h-3zM423 141.4h3v13.0h-3zM429 148.0h3v35.0h-3zM453 144.0h3v28.6h-3zM471 133.5h3v20.9h-3zM477 150.0h3v2.0h-3zM483 149.0h3v5.0h-3zM489 149.0h3v5.0h-3zM507 133.0h3v3.0h-3zM513 132.0h3v17.0h-3zM531 138.8h3v9.2h-3zM537 149.0h3v18.4h-3zM543 170.0h3v10.4h-3zM549 184.0h3v2.0h-3zM555 184.0h3v2.0h-3zM561 184.0h3v2.0h-3zM567 183.0h3v5.0h-3zM573 185.6h3v6.4h-3zM579 187.0h3v11.6h-3zM585 198.6h3v17.0h-3zM603 193.4h3v9.2h-3zM615 192.0h3v10.6h-3zM633 188.2h3v7.8h-3zM639 193.4h3v5.2h-3zM657 181.7h3v5.3h-3zM663 187.0h3v11.6h-3zM675 187.0h3v11.6h-3zM681 188.2h3v10.4h-3zM687 198.6h3v10.4h-3zM693 201.2h3v6.6h-3zM705 198.0h3v5.4h-3zM717 198.0h3v5.4h-3zM723 198.0h3v5.4h-3zM741 203.0h3v1.5h-3zM747 203.0h3v1.5h-3zM753 203.0h3v1.5h-3zM759 203.0h3v1.5h-3zM765 203.0h3v1.5h-3zM771 203.0h3v1.5h-3zM795 192.0h3v6.0h-3zM801 196.0h3v4.0h-3zM807 192.3h3v6.0h-3zM813 196.4h3v7.3h-3zM819 199.0h3v3.0h-3zM831 198.3h3v5.4h-3zM843 202.8h3v5.9h-3zM855 199.0h3v4.0h-3zM861 201.0h3v8.2h-3zM867 208.3h3v22.3h-3zM879 216.2h3v20.8h-3zM897 217.4h3v4.6h-3zM903 219.0h3v2.0h-3zM909 219.4h3v6.2h-3zM921 216.2h3v3.8h-3zM933 219.4h3v6.2h-3zM939 219.4h3v6.2h-3zM945 224.0h3v2.0h-3zM969 171.0h3v16.5h-3zM993 165.0h3v1.5h-3zM1005 160.5h3v11.2h-3zM1011 171.0h3v9.0h-3zM1029 153.0h3v2.0h-3zM1035 149.5h3v4.7h-3zM1041 152.0h3v1.5h-3zM1047 153.0h3v1.5h-3zM1065 127.6h3v10.9h-3zM1071 137.0h3v2.0h-3z" fill="#0000ff" shape-rendering="crispEdges"/></g>
<path d="M1084.5 18V575 M0 543.5H1143 M0 332.5H1084M1085 36.5H1090M1085 73.5H1090M1085 111.5H1090M1085 149.5H1090M1085 187.5H1090M1085 225.5H1090M1085 267.5H1090M1085 304.5H1090M1085 365.5H1090M1085 402.5H1090M1085 439.5H1090M1085 471.5H1090M1085 508.5H1090M52.5 543V548M172.5 543V548M268.5 543V548M364.5 543V548M460.5 543V548M568.5 543V548M664.5 543V548M760.5 543V548M856.5 543V548M952.5 543V548M1048.5 543V548" stroke="#000" stroke-width="1" fill="none" shape-rendering="crispEdges"/>
<path d="M1132.5 32.5V20.5H1143 M1132.5 20.5H1143" stroke="#c8c8c8" fill="none" shape-rendering="crispEdges"/>
<path d="M1133 32.5H1143" stroke="#888" fill="none" shape-rendering="crispEdges"/>
<path d="M1134.5 24.5 L1143.5 24.5 L1139.5 29.5Z" fill="#909090" stroke="#000" stroke-width="1"/>
<path d="M1132.5 263.5V251.5H1143 M1132.5 251.5H1143" stroke="#c8c8c8" fill="none" shape-rendering="crispEdges"/>
<path d="M1133 263.5H1143" stroke="#888" fill="none" shape-rendering="crispEdges"/>
<path d="M1134.5 255.5 L1143.5 255.5 L1139.5 260.5Z" fill="#909090" stroke="#000" stroke-width="1"/>
<path d="M1132.5 361.5V349.5H1143 M1132.5 349.5H1143" stroke="#c8c8c8" fill="none" shape-rendering="crispEdges"/>
<path d="M1133 361.5H1143" stroke="#888" fill="none" shape-rendering="crispEdges"/>
<path d="M1134.5 353.5 L1143.5 353.5 L1139.5 358.5Z" fill="#909090" stroke="#000" stroke-width="1"/>
<path d="M1132.5 467.5V455.5H1143 M1132.5 455.5H1143" stroke="#c8c8c8" fill="none" shape-rendering="crispEdges"/>
<path d="M1133 467.5H1143" stroke="#888" fill="none" shape-rendering="crispEdges"/>
<path d="M1134.5 459.5 L1143.5 459.5 L1139.5 464.5Z" fill="#909090" stroke="#000" stroke-width="1"/>
<rect x="1143" y="18" width="223" height="520" fill="#fff"/>
<rect x="1087.5" y="330.5" width="39" height="14" fill="#fff" stroke="#000" shape-rendering="crispEdges"/>
<path d="M1091 333L1098.5 340.5M1098.5 333L1091 340.5" stroke="#000" stroke-width="1.1" fill="none"/></svg>
<div class="t" style="left:2px;top:21px"><span class="j" style="width:24px">日経</span>225mini&#160;13/09(&#160;5<span class="j" style="width:12px">分</span>,&#160;2013/08/23&#160;-&#160;2013/08/27&#160;)</div>
<div class="t" style="left:316px;top:21px"><span class="j" style="width:60px">一目均衡表</span>(&#160;9,&#160;26,&#160;52&#160;)</div>
<div class="t" style="left:474px;top:21px"><span class="j" style="width:48px">移動平均</span>(&#160;Close,&#160;75&#160;)</div>
<div class="t" style="left:620px;top:21px"><span class="j" style="width:48px">移動平均</span>(&#160;Close,&#160;75&#160;)</div>
<div class="t" style="left:766px;top:21px"><span class="j" style="width:48px">移動平均</span>(&#160;Close,&#160;10&#160;)</div>
<div class="t" style="left:912px;top:21px"><span class="j" style="width:48px">移動平均</span>(&#160;Close,&#160;150&#160;)</div>
<div class="t" style="left:2px;top:35px"><span class="j" style="width:48px">移動平均</span>(&#160;Close,&#160;20&#160;)</div>
<div class="t" style="left:148px;top:35px"><span class="j" style="width:48px">移動平均</span>(&#160;Close,&#160;5&#160;)</div>
<div class="t" style="left:288px;top:35px"><span class="j" style="width:48px">移動平均</span>(&#160;Close,&#160;40&#160;)</div>
<div class="t" style="left:434px;top:35px"><span class="j" style="width:48px">移動平均</span>(&#160;Close,&#160;25&#160;)</div>
<div class="t" style="left:2px;top:251px"><span class="j" style="width:36px">出来高</span></div>
<div class="t" style="left:2px;top:350px">MACD(&#160;12,&#160;26,&#160;9&#160;)</div>
<div class="t" style="left:2px;top:456px"><span class="j" style="width:156px">スロー・ストキャスティクス</span>(&#160;14,&#160;3,&#160;80,&#160;20&#160;)</div>
<div class="t" style="left:1093px;top:32px">13,740</div>
<div class="t" style="left:1093px;top:69px">13,705</div>
<div class="t" style="left:1093px;top:107px">13,670</div>
<div class="t" style="left:1093px;top:145px">13,635</div>
<div class="t" style="left:1093px;top:183px">13,600</div>
<div class="t" style="left:1093px;top:221px">13,565</div>
<div class="t" style="left:1093px;top:263px">175.00</div>
<div class="t" style="left:1093px;top:300px">75.00</div>
<div class="t" style="left:1093px;top:361px">16.00</div>
<div class="t" style="left:1093px;top:398px">-4.50</div>
<div class="t" style="left:1093px;top:435px">-25.00</div>
<div class="t" style="left:1093px;top:467px">95.00</div>
<div class="t" style="left:1093px;top:504px">35.00</div>
<div class="t" style="left:1106px;top:331px">100</div>
<div class="t" style="left:52px;top:553px">08/26</div>
<div class="t" style="left:172px;top:553px">10:40</div>
<div class="t" style="left:268px;top:553px">12:00</div>
<div class="t" style="left:364px;top:553px">13:20</div>
<div class="t" style="left:460px;top:553px">14:40</div>
<div class="t" style="left:568px;top:553px">17:20</div>
<div class="t" style="left:664px;top:553px">18:40</div>
<div class="t" style="left:760px;top:553px">20:00</div>
<div class="t" style="left:856px;top:553px">21:20</div>
<div class="t" style="left:952px;top:553px">22:40</div>
<div class="t" style="left:1048px;top:553px">08/27</div>
</body></html>
